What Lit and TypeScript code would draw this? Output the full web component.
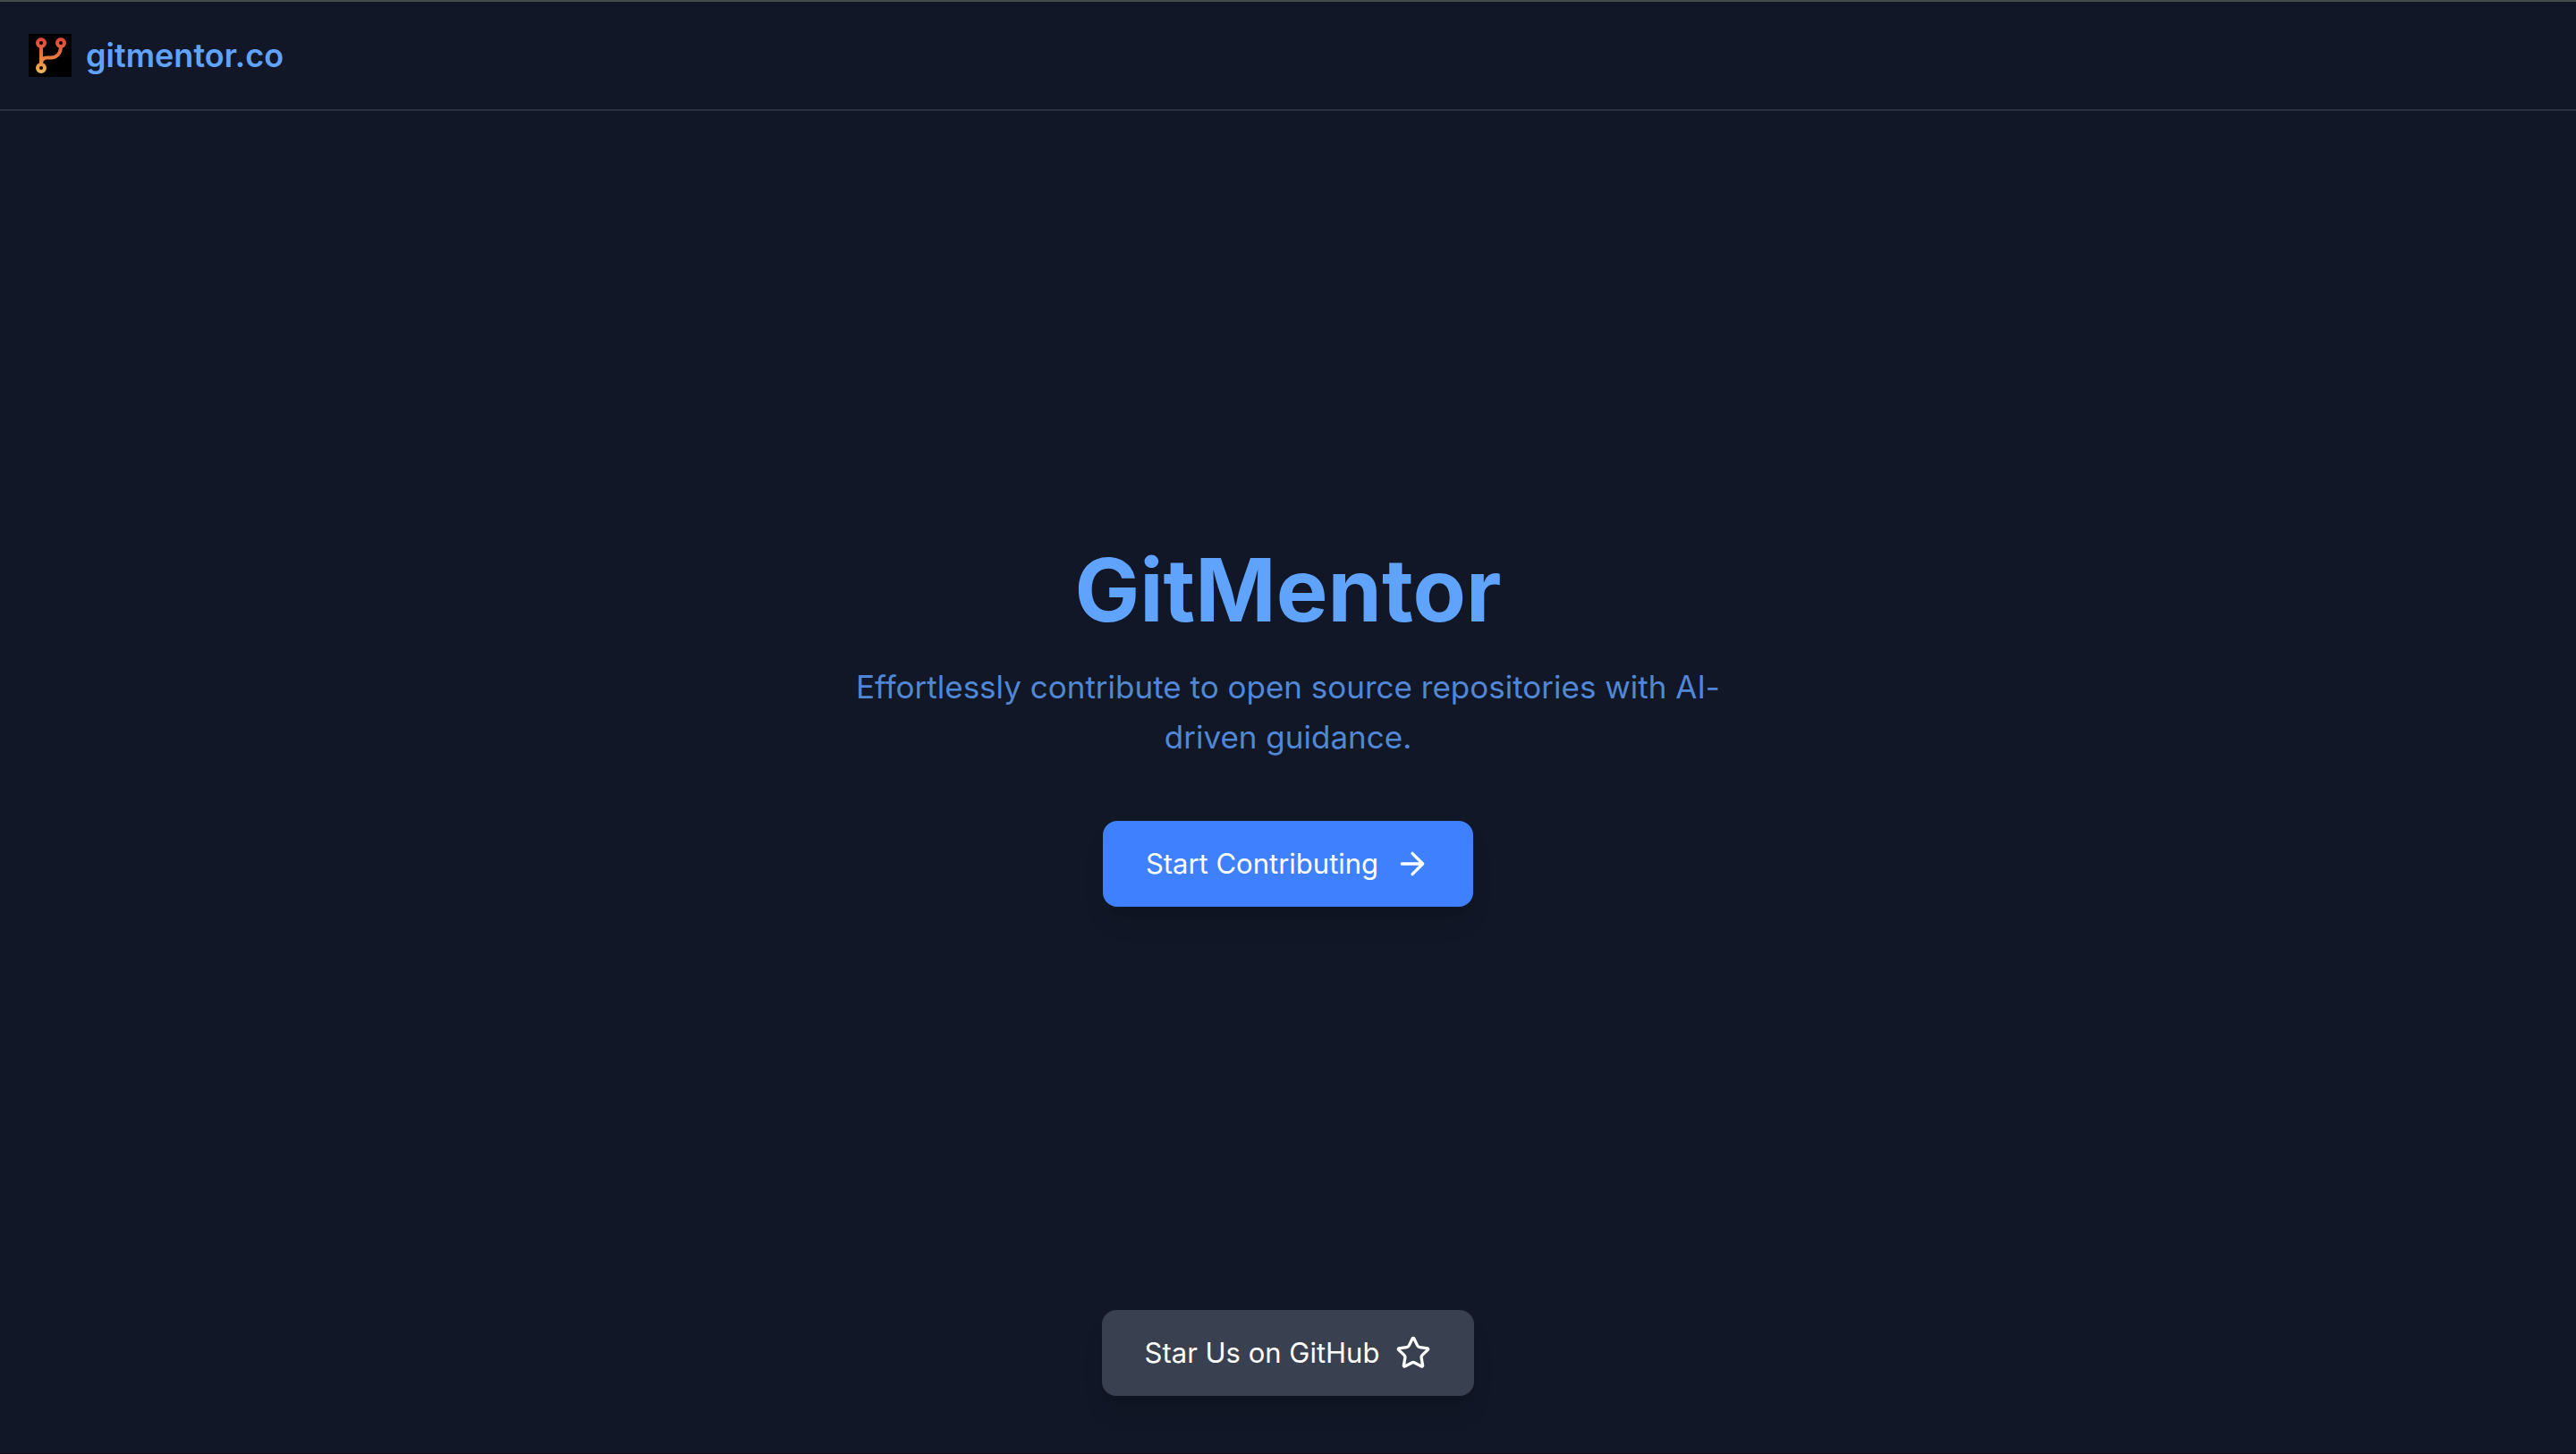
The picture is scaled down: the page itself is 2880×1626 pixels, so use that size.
import { LitElement, html, css } from "lit";
import { customElement } from "lit/decorators.js";

@customElement("app-root")
export class AppRoot extends LitElement {
  static styles = css`
    :host {
      display: grid;
      grid-template-rows: 1fr auto 1fr;
      box-sizing: border-box;
      min-height: 100vh;
      border-bottom: 1px solid #0b0c14;
      background: #111726;
      color: #60a3fd;
      font-family: Inter, "Liberation Sans", sans-serif;
    }
    .header {
      align-self: start;
      display: flex;
      padding: 36px 32px;
      border-top: 2px solid #454a4b;
      border-bottom: 2px solid #2a3040;
    }
    .brand {
      display: flex;
      align-items: center;
      gap: 16px;
      color: inherit;
      font-size: 36px;
      font-weight: 600;
      line-height: 48px;
      text-decoration: none;
    }
    .logo {
      width: 48px;
      height: 48px;
    }
    .hero {
      display: flex;
      flex-direction: column;
      align-items: center;
      text-align: center;
    }
    .title {
      margin: 0 0 32px;
      font-size: 97px;
      font-weight: 700;
      line-height: 96px;
    }
    .tagline {
      max-width: 1024px;
      margin: 0 0 66px;
      color: #5087d6;
      font-size: 35px;
      line-height: 56px;
    }
    .action {
      display: inline-flex;
      align-items: center;
      gap: 18px;
      padding: 24px 48px;
      border: 0;
      border-radius: 16px;
      color: #fff;
      font-family: inherit;
      font-size: 31px;
      line-height: 48px;
      text-decoration: none;
      cursor: pointer;
      box-shadow: 0 20px 30px -6px rgb(0 0 0 / 0.1), 0 8px 12px -8px rgb(0 0 0 / 0.1);
    }
    .primary {
      background: #3f80ff;
    }
    .secondary {
      background: #394150;
    }
    .icon {
      width: 40px;
      height: 40px;
      fill: none;
      stroke: currentColor;
      stroke-width: 2;
      stroke-linecap: round;
      stroke-linejoin: round;
    }
    .footer {
      align-self: end;
      display: flex;
      justify-content: center;
      padding: 64px;
    }
  `;

  render() {
    return html`
      <header class="header">
        <a class="brand" href="/">
          <svg class="logo" viewBox="0 0 48 48" aria-hidden="true">
            <defs>
              <linearGradient id="flame" gradientUnits="userSpaceOnUse" x1="0" y1="4" x2="0" y2="44">
                <stop offset="0" stop-color="#e0443a" />
                <stop offset="0.55" stop-color="#e8793e" />
                <stop offset="1" stop-color="#f2bb58" />
              </linearGradient>
            </defs>
            <rect width="48" height="48" fill="#000" />
            <g fill="none" stroke="url(#flame)" stroke-width="4">
              <circle cx="14" cy="10" r="4" />
              <circle cx="36" cy="10" r="4" />
              <circle cx="14" cy="38" r="4" />
              <path d="M14.01 14 L14 34 M14 33 C14 28 17 26.500 21 26.500 H25 C31 26.500 36 22 36 14" />
            </g>
          </svg>
          <span>gitmentor.co</span>
        </a>
      </header>
      <main class="hero">
        <h1 class="title">GitMentor</h1>
        <p class="tagline">Effortlessly contribute to open source repositories with AI-driven guidance.</p>
        <button class="action primary" type="button">
          Start Contributing
          <svg class="icon" viewBox="0 0 24 24" aria-hidden="true">
            <path d="M5 12h14M12 5l7 7-7 7" />
          </svg>
        </button>
      </main>
      <footer class="footer">
        <a class="action secondary" href="https://github.com">
          Star Us on GitHub
          <svg class="icon" viewBox="0 0 24 24" aria-hidden="true">
            <path d="M11.525 2.295a.53.53 0 0 1 .95 0l2.310 4.679a2.123 2.123 0 0 0 1.595 1.160l5.166.756a.53.53 0 0 1 .294.904l-3.736 3.638a2.123 2.123 0 0 0-.611 1.878l.882 5.140a.53.53 0 0 1-.771.560l-4.618-2.428a2.122 2.122 0 0 0-1.973 0L6.396 21.010a.53.53 0 0 1-.770-.560l.881-5.139a2.122 2.122 0 0 0-.611-1.879L2.160 9.795a.53.53 0 0 1 .294-.906l5.165-.755a2.122 2.122 0 0 0 1.597-1.160z" />
          </svg>
        </a>
      </footer>
    `;
  }
}
